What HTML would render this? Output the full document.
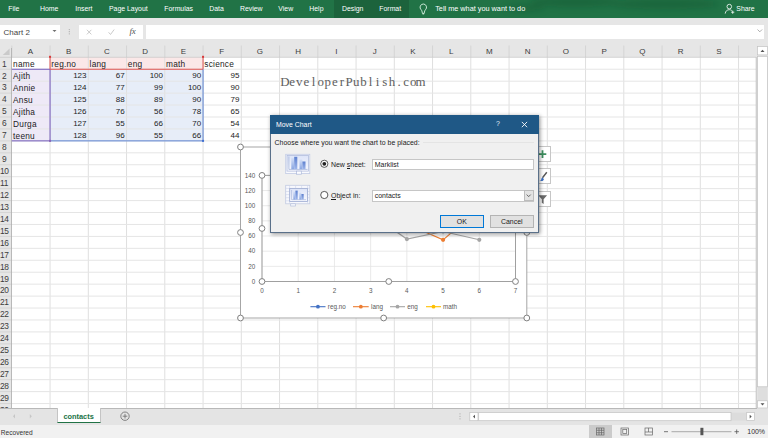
<!DOCTYPE html>
<html><head><meta charset="utf-8"><title>Move Chart</title>
<style>
html,body{margin:0;padding:0;}
body{width:768px;height:438px;overflow:hidden;background:#e6e6e6;font-family:"Liberation Sans",sans-serif;position:relative;}
.abs{position:absolute;}
.t{position:absolute;white-space:nowrap;line-height:1;}
.rib{color:#fff;font-size:6.9px;top:6.3px;}
.cell{font-size:8.3px;color:#1c1c1c;letter-spacing:0.22px;}
.num{font-size:8px;letter-spacing:0;}
.hdr{font-size:8px;color:#3c3c3c;text-align:center;}
.ui{font-size:6.95px;color:#1a1a1a;}
.ax{font-size:6.3px;color:#595959;}
</style></head><body>

<div class="abs" style="left:0;top:0;width:768px;height:17.5px;background:#217346"></div>
<div class="abs" style="left:333.8px;top:0;width:75.6px;height:17.5px;background:#1c633c"></div>
<svg class="abs" style="left:480px;top:0" width="288" height="18" viewBox="480 0 288 18"><defs><filter id="bl" x="-20%" y="-100%" width="140%" height="300%"><feGaussianBlur stdDeviation="3"/></filter></defs><g filter="url(#bl)" fill="#0f4d2b" opacity="0.350"><ellipse cx="575" cy="2" rx="45" ry="5"/><ellipse cx="665" cy="4" rx="55" ry="5"/><ellipse cx="525" cy="8" rx="20" ry="3"/></g></svg>
<div class="t rib" style="left:8.3px">File</div>
<div class="t rib" style="left:40px">Home</div>
<div class="t rib" style="left:75.3px">Insert</div>
<div class="t rib" style="left:109px">Page Layout</div>
<div class="t rib" style="left:164.3px">Formulas</div>
<div class="t rib" style="left:209.3px">Data</div>
<div class="t rib" style="left:240px">Review</div>
<div class="t rib" style="left:278.3px">View</div>
<div class="t rib" style="left:309.3px">Help</div>
<div class="t rib" style="left:342px">Design</div>
<div class="t rib" style="left:379.3px">Format</div>
<div class="t rib" style="left:435.2px;font-size:7.3px;top:5.100px">Tell me what you want to do</div>
<div class="t rib" style="left:736.3px">Share</div>
<svg class="abs" style="left:417px;top:2px" width="13" height="15" viewBox="417 2 13 15"><path d="M423.300 4a3.300 3.300 0 0 0-2.200 5.700c.7.700 1 1.600 1.300 3.700h1.800c.3-2.100.600-3 1.300-3.700A3.300 3.300 0 0 0 423.300 4z" fill="none" stroke="#d8f2e2" stroke-width="0.900"/><path d="M422.500 14h1.600" stroke="#d8f2e2" stroke-width="0.800" fill="none"/></svg>
<svg class="abs" style="left:723px;top:2.400px" width="14" height="14" viewBox="0 0 14 14"><circle cx="6.3" cy="4.6" r="2.3" fill="none" stroke="#fff" stroke-width="0.8"/><path d="M2.2 11.6c.3-2.6 2-3.9 4.1-3.9 1 0 1.800.3 2.500.8" fill="none" stroke="#fff" stroke-width="0.8"/><path d="M9.700 8.600v3.200M8.100 10.200h3.200" stroke="#fff" stroke-width="0.8"/></svg>
<div class="abs" style="left:0;top:24.6px;width:59.8px;height:14px;background:#fff"></div>
<div class="t" style="left:3.6px;top:28.5px;font-size:8px;color:#444">Chart 2</div>
<svg class="abs" style="left:51px;top:28px" width="7" height="6"><path d="M1.500 1.900h4l-2 2.200z" fill="#6e6e6e"/></svg>
<svg class="abs" style="left:67px;top:27px" width="5" height="10"><circle cx="2.300" cy="2.600" r="0.600" fill="#aaa"/><circle cx="2.300" cy="4.700" r="0.600" fill="#aaa"/><circle cx="2.300" cy="6.800" r="0.600" fill="#aaa"/></svg>
<div class="abs" style="left:78.800px;top:24.600px;width:64.400px;height:14px;background:#fff"></div>
<svg class="abs" style="left:78.800px;top:24.600px" width="65" height="14" viewBox="0 0 65 14"><path d="M7.900 4.800l4.500 4.600M12.400 4.800l-4.500 4.600" stroke="#c4c4c4" stroke-width="0.900" fill="none"/><path d="M29.600 7.300l1.900 2.200 3.700-5" stroke="#c4c4c4" stroke-width="0.900" fill="none"/></svg>
<div class="t" style="left:129.500px;top:26.500px;font-size:9px;color:#505050;font-family:'Liberation Serif',serif;font-style:italic;letter-spacing:-0.300px">fx</div>
<div class="abs" style="left:146.400px;top:24.600px;width:617.400px;height:14px;background:#fff"></div>
<svg class="abs" style="left:756px;top:28px" width="8" height="6"><path d="M1.500 1.500l2.300 2.300 2.300-2.300" stroke="#999" stroke-width="0.800" fill="none"/></svg>
<div class="abs" style="left:0;top:45px;width:768px;height:363.5px;background:#e6e6e6"></div>
<div class="abs" style="left:11.8px;top:57.3px;width:744.2px;height:351.2px;background:#fff"></div>
<div class="abs" style="left:11.8px;top:69.24px;width:38.25px;height:71.64px;background:#eee9f7"></div>
<div class="abs" style="left:50.05px;top:57.3px;width:153.0px;height:11.94px;background:#fbe8e8"></div>
<div class="abs" style="left:50.05px;top:69.24px;width:153.0px;height:71.64px;background:#e7edf8"></div>
<svg class="abs" style="left:0;top:0" width="768" height="438" viewBox="0 0 768 438"><g stroke="#e5e5e5" stroke-width="1" fill="none"><path d="M50.05 57.3V408.5" stroke="#dfdfdf"/><path d="M88.30 57.3V408.5" stroke="#dfdfdf"/><path d="M126.55 57.3V408.5" stroke="#dfdfdf"/><path d="M164.80 57.3V408.5" stroke="#dfdfdf"/><path d="M203.05 57.3V408.5" stroke="#dfdfdf"/><path d="M241.30 57.3V408.5" stroke="#dfdfdf"/><path d="M279.55 57.3V408.5" stroke="#dfdfdf"/><path d="M317.80 57.3V408.5" stroke="#dfdfdf"/><path d="M356.05 57.3V408.5" stroke="#dfdfdf"/><path d="M394.30 57.3V408.5" stroke="#dfdfdf"/><path d="M432.55 57.3V408.5" stroke="#dfdfdf"/><path d="M470.80 57.3V408.5" stroke="#dfdfdf"/><path d="M509.05 57.3V408.5" stroke="#dfdfdf"/><path d="M547.30 57.3V408.5" stroke="#dfdfdf"/><path d="M585.55 57.3V408.5" stroke="#dfdfdf"/><path d="M623.80 57.3V408.5" stroke="#dfdfdf"/><path d="M662.05 57.3V408.5" stroke="#dfdfdf"/><path d="M700.30 57.3V408.5" stroke="#dfdfdf"/><path d="M738.55 57.3V408.5" stroke="#dfdfdf"/><path d="M11.8 69.24H756.0"/><path d="M11.8 81.18H756.0"/><path d="M11.8 93.12H756.0"/><path d="M11.8 105.06H756.0"/><path d="M11.8 117.00H756.0"/><path d="M11.8 128.94H756.0"/><path d="M11.8 140.88H756.0"/><path d="M11.8 152.82H756.0"/><path d="M11.8 164.76H756.0"/><path d="M11.8 176.70H756.0"/><path d="M11.8 188.64H756.0"/><path d="M11.8 200.58H756.0"/><path d="M11.8 212.52H756.0"/><path d="M11.8 224.46H756.0"/><path d="M11.8 236.40H756.0"/><path d="M11.8 248.34H756.0"/><path d="M11.8 260.28H756.0"/><path d="M11.8 272.22H756.0"/><path d="M11.8 284.16H756.0"/><path d="M11.8 296.10H756.0"/><path d="M11.8 308.04H756.0"/><path d="M11.8 319.98H756.0"/><path d="M11.8 331.92H756.0"/><path d="M11.8 343.86H756.0"/><path d="M11.8 355.80H756.0"/><path d="M11.8 367.74H756.0"/><path d="M11.8 379.68H756.0"/><path d="M11.8 391.62H756.0"/><path d="M11.8 403.56H756.0"/></g><g stroke="#cfcfcf" stroke-width="0.8" fill="none"><path d="M11.80 45.500V57.3"/><path d="M50.05 45.500V57.3"/><path d="M88.30 45.500V57.3"/><path d="M126.55 45.500V57.3"/><path d="M164.80 45.500V57.3"/><path d="M203.05 45.500V57.3"/><path d="M241.30 45.500V57.3"/><path d="M279.55 45.500V57.3"/><path d="M317.80 45.500V57.3"/><path d="M356.05 45.500V57.3"/><path d="M394.30 45.500V57.3"/><path d="M432.55 45.500V57.3"/><path d="M470.80 45.500V57.3"/><path d="M509.05 45.500V57.3"/><path d="M547.30 45.500V57.3"/><path d="M585.55 45.500V57.3"/><path d="M623.80 45.500V57.3"/><path d="M662.05 45.500V57.3"/><path d="M700.30 45.500V57.3"/><path d="M738.55 45.500V57.3"/><path d="M0 69.24H11.8"/><path d="M0 81.18H11.8"/><path d="M0 93.12H11.8"/><path d="M0 105.06H11.8"/><path d="M0 117.00H11.8"/><path d="M0 128.94H11.8"/><path d="M0 140.88H11.8"/><path d="M0 152.82H11.8"/><path d="M0 164.76H11.8"/><path d="M0 176.70H11.8"/><path d="M0 188.64H11.8"/><path d="M0 200.58H11.8"/><path d="M0 212.52H11.8"/><path d="M0 224.46H11.8"/><path d="M0 236.40H11.8"/><path d="M0 248.34H11.8"/><path d="M0 260.28H11.8"/><path d="M0 272.22H11.8"/><path d="M0 284.16H11.8"/><path d="M0 296.10H11.8"/><path d="M0 308.04H11.8"/><path d="M0 319.98H11.8"/><path d="M0 331.92H11.8"/><path d="M0 343.86H11.8"/><path d="M0 355.80H11.8"/><path d="M0 367.74H11.8"/><path d="M0 379.68H11.8"/><path d="M0 391.62H11.8"/><path d="M0 403.56H11.8"/></g><path d="M0 57.3H756.0" stroke="#c9c9c9" stroke-width="0.8"/><path d="M11.5 48V408.5" stroke="#adadad" stroke-width="0.8"/><path d="M9.600 48.400V55H2.800z" fill="#cacaca"/><path d="M11.8 69.24H50.05V140.88H11.8" stroke="#7158ba" stroke-width="1" fill="none"/><path d="M50.05 56.3V69.24H203.05V56.3" stroke="#e0504d" stroke-width="1" fill="none"/><path d="M50.05 140.88H203.05V69.24" stroke="#5a82d2" stroke-width="1" fill="none"/><rect x="49.05" y="139.88" width="2" height="2" fill="#8a63b8"/><rect x="202.05" y="139.88" width="2" height="2" fill="#3f6fd0"/><rect x="49.05" y="55.8" width="2" height="2" fill="#d8393a"/><rect x="202.05" y="55.8" width="2" height="2" fill="#d8393a"/></svg>
<div class="t hdr" style="left:11.30px;top:48.100px;width:38.25px">A</div>
<div class="t hdr" style="left:49.55px;top:48.100px;width:38.25px">B</div>
<div class="t hdr" style="left:87.80px;top:48.100px;width:38.25px">C</div>
<div class="t hdr" style="left:126.05px;top:48.100px;width:38.25px">D</div>
<div class="t hdr" style="left:164.30px;top:48.100px;width:38.25px">E</div>
<div class="t hdr" style="left:202.55px;top:48.100px;width:38.25px">F</div>
<div class="t hdr" style="left:240.80px;top:48.100px;width:38.25px">G</div>
<div class="t hdr" style="left:279.05px;top:48.100px;width:38.25px">H</div>
<div class="t hdr" style="left:317.30px;top:48.100px;width:38.25px">I</div>
<div class="t hdr" style="left:355.55px;top:48.100px;width:38.25px">J</div>
<div class="t hdr" style="left:393.80px;top:48.100px;width:38.25px">K</div>
<div class="t hdr" style="left:432.05px;top:48.100px;width:38.25px">L</div>
<div class="t hdr" style="left:470.30px;top:48.100px;width:38.25px">M</div>
<div class="t hdr" style="left:508.55px;top:48.100px;width:38.25px">N</div>
<div class="t hdr" style="left:546.80px;top:48.100px;width:38.25px">O</div>
<div class="t hdr" style="left:585.05px;top:48.100px;width:38.25px">P</div>
<div class="t hdr" style="left:623.30px;top:48.100px;width:38.25px">Q</div>
<div class="t hdr" style="left:661.55px;top:48.100px;width:38.25px">R</div>
<div class="t hdr" style="left:699.80px;top:48.100px;width:38.25px">S</div>
<div class="t hdr" style="left:0;top:59.60px;width:8.200000000000001px;font-size:8.400px;letter-spacing:-0.350px">1</div>
<div class="t hdr" style="left:0;top:71.54px;width:8.200000000000001px;font-size:8.400px;letter-spacing:-0.350px">2</div>
<div class="t hdr" style="left:0;top:83.48px;width:8.200000000000001px;font-size:8.400px;letter-spacing:-0.350px">3</div>
<div class="t hdr" style="left:0;top:95.42px;width:8.200000000000001px;font-size:8.400px;letter-spacing:-0.350px">4</div>
<div class="t hdr" style="left:0;top:107.36px;width:8.200000000000001px;font-size:8.400px;letter-spacing:-0.350px">5</div>
<div class="t hdr" style="left:0;top:119.30px;width:8.200000000000001px;font-size:8.400px;letter-spacing:-0.350px">6</div>
<div class="t hdr" style="left:0;top:131.24px;width:8.200000000000001px;font-size:8.400px;letter-spacing:-0.350px">7</div>
<div class="t hdr" style="left:0;top:143.18px;width:8.200000000000001px;font-size:8.400px;letter-spacing:-0.350px">8</div>
<div class="t hdr" style="left:0;top:155.12px;width:8.200000000000001px;font-size:8.400px;letter-spacing:-0.350px">9</div>
<div class="t hdr" style="left:0;top:167.06px;width:8.200000000000001px;font-size:8.400px;letter-spacing:-0.350px">10</div>
<div class="t hdr" style="left:0;top:179.00px;width:8.200000000000001px;font-size:8.400px;letter-spacing:-0.350px">11</div>
<div class="t hdr" style="left:0;top:190.94px;width:8.200000000000001px;font-size:8.400px;letter-spacing:-0.350px">12</div>
<div class="t hdr" style="left:0;top:202.88px;width:8.200000000000001px;font-size:8.400px;letter-spacing:-0.350px">13</div>
<div class="t hdr" style="left:0;top:214.82px;width:8.200000000000001px;font-size:8.400px;letter-spacing:-0.350px">14</div>
<div class="t hdr" style="left:0;top:226.76px;width:8.200000000000001px;font-size:8.400px;letter-spacing:-0.350px">15</div>
<div class="t hdr" style="left:0;top:238.70px;width:8.200000000000001px;font-size:8.400px;letter-spacing:-0.350px">16</div>
<div class="t hdr" style="left:0;top:250.64px;width:8.200000000000001px;font-size:8.400px;letter-spacing:-0.350px">17</div>
<div class="t hdr" style="left:0;top:262.58px;width:8.200000000000001px;font-size:8.400px;letter-spacing:-0.350px">18</div>
<div class="t hdr" style="left:0;top:274.52px;width:8.200000000000001px;font-size:8.400px;letter-spacing:-0.350px">19</div>
<div class="t hdr" style="left:0;top:286.46px;width:8.200000000000001px;font-size:8.400px;letter-spacing:-0.350px">20</div>
<div class="t hdr" style="left:0;top:298.40px;width:8.200000000000001px;font-size:8.400px;letter-spacing:-0.350px">21</div>
<div class="t hdr" style="left:0;top:310.34px;width:8.200000000000001px;font-size:8.400px;letter-spacing:-0.350px">22</div>
<div class="t hdr" style="left:0;top:322.28px;width:8.200000000000001px;font-size:8.400px;letter-spacing:-0.350px">23</div>
<div class="t hdr" style="left:0;top:334.22px;width:8.200000000000001px;font-size:8.400px;letter-spacing:-0.350px">24</div>
<div class="t hdr" style="left:0;top:346.16px;width:8.200000000000001px;font-size:8.400px;letter-spacing:-0.350px">25</div>
<div class="t hdr" style="left:0;top:358.10px;width:8.200000000000001px;font-size:8.400px;letter-spacing:-0.350px">26</div>
<div class="t hdr" style="left:0;top:370.04px;width:8.200000000000001px;font-size:8.400px;letter-spacing:-0.350px">27</div>
<div class="t hdr" style="left:0;top:381.98px;width:8.200000000000001px;font-size:8.400px;letter-spacing:-0.350px">28</div>
<div class="t hdr" style="left:0;top:393.92px;width:8.200000000000001px;font-size:8.400px;letter-spacing:-0.350px">29</div>
<div class="t hdr" style="left:0;top:405.86px;width:8.200000000000001px;font-size:8.400px;letter-spacing:-0.350px">30</div>
<div class="t cell" style="left:13.10px;top:59.90px">name</div>
<div class="t cell" style="left:51.35px;top:59.90px">reg.no</div>
<div class="t cell" style="left:89.60px;top:59.90px">lang</div>
<div class="t cell" style="left:127.85px;top:59.90px">eng</div>
<div class="t cell" style="left:166.10px;top:59.90px">math</div>
<div class="t cell" style="left:204.35px;top:59.90px">science</div>
<div class="t cell" style="left:13.10px;top:71.84px">Ajith</div>
<div class="t cell num" style="left:50.05px;width:36.45px;text-align:right;top:72.04px">123</div>
<div class="t cell num" style="left:88.30px;width:36.45px;text-align:right;top:72.04px">67</div>
<div class="t cell num" style="left:126.55px;width:36.45px;text-align:right;top:72.04px">100</div>
<div class="t cell num" style="left:164.80px;width:36.45px;text-align:right;top:72.04px">90</div>
<div class="t cell num" style="left:203.05px;width:36.45px;text-align:right;top:72.04px">95</div>
<div class="t cell" style="left:13.10px;top:83.78px">Annie</div>
<div class="t cell num" style="left:50.05px;width:36.45px;text-align:right;top:83.98px">124</div>
<div class="t cell num" style="left:88.30px;width:36.45px;text-align:right;top:83.98px">77</div>
<div class="t cell num" style="left:126.55px;width:36.45px;text-align:right;top:83.98px">99</div>
<div class="t cell num" style="left:164.80px;width:36.45px;text-align:right;top:83.98px">100</div>
<div class="t cell num" style="left:203.05px;width:36.45px;text-align:right;top:83.98px">90</div>
<div class="t cell" style="left:13.10px;top:95.72px">Ansu</div>
<div class="t cell num" style="left:50.05px;width:36.45px;text-align:right;top:95.92px">125</div>
<div class="t cell num" style="left:88.30px;width:36.45px;text-align:right;top:95.92px">88</div>
<div class="t cell num" style="left:126.55px;width:36.45px;text-align:right;top:95.92px">89</div>
<div class="t cell num" style="left:164.80px;width:36.45px;text-align:right;top:95.92px">90</div>
<div class="t cell num" style="left:203.05px;width:36.45px;text-align:right;top:95.92px">79</div>
<div class="t cell" style="left:13.10px;top:107.66px">Ajitha</div>
<div class="t cell num" style="left:50.05px;width:36.45px;text-align:right;top:107.86px">126</div>
<div class="t cell num" style="left:88.30px;width:36.45px;text-align:right;top:107.86px">76</div>
<div class="t cell num" style="left:126.55px;width:36.45px;text-align:right;top:107.86px">56</div>
<div class="t cell num" style="left:164.80px;width:36.45px;text-align:right;top:107.86px">78</div>
<div class="t cell num" style="left:203.05px;width:36.45px;text-align:right;top:107.86px">65</div>
<div class="t cell" style="left:13.10px;top:119.60px">Durga</div>
<div class="t cell num" style="left:50.05px;width:36.45px;text-align:right;top:119.80px">127</div>
<div class="t cell num" style="left:88.30px;width:36.45px;text-align:right;top:119.80px">55</div>
<div class="t cell num" style="left:126.55px;width:36.45px;text-align:right;top:119.80px">66</div>
<div class="t cell num" style="left:164.80px;width:36.45px;text-align:right;top:119.80px">70</div>
<div class="t cell num" style="left:203.05px;width:36.45px;text-align:right;top:119.80px">54</div>
<div class="t cell" style="left:13.10px;top:131.54px">teenu</div>
<div class="t cell num" style="left:50.05px;width:36.45px;text-align:right;top:131.74px">128</div>
<div class="t cell num" style="left:88.30px;width:36.45px;text-align:right;top:131.74px">96</div>
<div class="t cell num" style="left:126.55px;width:36.45px;text-align:right;top:131.74px">55</div>
<div class="t cell num" style="left:164.80px;width:36.45px;text-align:right;top:131.74px">66</div>
<div class="t cell num" style="left:203.05px;width:36.45px;text-align:right;top:131.74px">44</div>
<svg class="abs" style="left:0;top:70px" width="768" height="30" viewBox="0 70 768 30"><text x="284.97 292.10 299.23 306.36 313.49 320.62 327.75 334.88 342.01 349.14 356.27 363.40 370.53 377.66 384.79 391.92 399.05 406.18 413.31 420.44" y="86.300" text-anchor="middle" font-family="Liberation Serif, serif" font-size="12.900" fill="#606060">DeveloperPublish.com</text></svg>
<svg class="abs" style="left:0;top:0" width="768" height="438" viewBox="0 0 768 438"><rect x="240.5" y="147" width="286.29999999999995" height="171" fill="#fff" stroke="#a6a6a6" stroke-width="1"/><g stroke="#e3e3e3" stroke-width="0.8"><path d="M262 281.50H515.5"/><path d="M262 266.34H515.5"/><path d="M262 251.19H515.5"/><path d="M262 236.03H515.5"/><path d="M262 220.87H515.5"/><path d="M262 205.71H515.5"/><path d="M262 190.56H515.5"/><path d="M262 175.40H515.5"/><path d="M262.00 175.4V281.5"/><path d="M298.21 175.4V281.5"/><path d="M334.43 175.4V281.5"/><path d="M370.64 175.4V281.5"/><path d="M406.86 175.4V281.5"/><path d="M443.07 175.4V281.5"/><path d="M479.29 175.4V281.5"/><path d="M515.50 175.4V281.5"/></g><rect x="262" y="175.4" width="253.5" height="106.1" fill="none" stroke="#a0a0a0" stroke-width="1"/><polyline points="298.21,230.72 334.43,223.15 370.64,214.81 406.86,223.90 443.07,239.82 479.29,208.75" fill="none" stroke="#ed7d31" stroke-width="1.100"/><circle cx="298.21" cy="230.72" r="2.100" fill="#ed7d31"/><circle cx="334.43" cy="223.15" r="2.100" fill="#ed7d31"/><circle cx="370.64" cy="214.81" r="2.100" fill="#ed7d31"/><circle cx="406.86" cy="223.90" r="2.100" fill="#ed7d31"/><circle cx="443.07" cy="239.82" r="2.100" fill="#ed7d31"/><circle cx="479.29" cy="208.75" r="2.100" fill="#ed7d31"/><polyline points="298.21,205.71 334.43,206.47 370.64,214.05 406.86,239.06 443.07,231.48 479.29,239.82" fill="none" stroke="#a5a5a5" stroke-width="1.100"/><circle cx="298.21" cy="205.71" r="2.100" fill="#a5a5a5"/><circle cx="334.43" cy="206.47" r="2.100" fill="#a5a5a5"/><circle cx="370.64" cy="214.05" r="2.100" fill="#a5a5a5"/><circle cx="406.86" cy="239.06" r="2.100" fill="#a5a5a5"/><circle cx="443.07" cy="231.48" r="2.100" fill="#a5a5a5"/><circle cx="479.29" cy="239.82" r="2.100" fill="#a5a5a5"/><path d="M310.4 306.700H325.5" stroke="#4472c4" stroke-width="1.100"/><circle cx="317.95" cy="306.700" r="1.900" fill="#4472c4"/><text x="327.8" y="308.800" font-size="6.300" fill="#595959" font-family="Liberation Sans, sans-serif">reg.no</text><path d="M353 306.700H368.7" stroke="#ed7d31" stroke-width="1.100"/><circle cx="360.85" cy="306.700" r="1.900" fill="#ed7d31"/><text x="371" y="308.800" font-size="6.300" fill="#595959" font-family="Liberation Sans, sans-serif">lang</text><path d="M390 306.700H405" stroke="#a5a5a5" stroke-width="1.100"/><circle cx="397.5" cy="306.700" r="1.900" fill="#a5a5a5"/><text x="407.3" y="308.800" font-size="6.300" fill="#595959" font-family="Liberation Sans, sans-serif">eng</text><path d="M426 306.700H441" stroke="#ffc000" stroke-width="1.100"/><circle cx="433.5" cy="306.700" r="1.900" fill="#ffc000"/><text x="443" y="308.800" font-size="6.300" fill="#595959" font-family="Liberation Sans, sans-serif">math</text><text x="255.200" y="283.70" text-anchor="end" font-size="6.300" fill="#595959" font-family="Liberation Sans, sans-serif">0</text><text x="262.00" y="293" text-anchor="middle" font-size="6.300" fill="#595959" font-family="Liberation Sans, sans-serif">0</text><text x="255.200" y="268.54" text-anchor="end" font-size="6.300" fill="#595959" font-family="Liberation Sans, sans-serif">20</text><text x="298.21" y="293" text-anchor="middle" font-size="6.300" fill="#595959" font-family="Liberation Sans, sans-serif">1</text><text x="255.200" y="253.39" text-anchor="end" font-size="6.300" fill="#595959" font-family="Liberation Sans, sans-serif">40</text><text x="334.43" y="293" text-anchor="middle" font-size="6.300" fill="#595959" font-family="Liberation Sans, sans-serif">2</text><text x="255.200" y="238.23" text-anchor="end" font-size="6.300" fill="#595959" font-family="Liberation Sans, sans-serif">60</text><text x="370.64" y="293" text-anchor="middle" font-size="6.300" fill="#595959" font-family="Liberation Sans, sans-serif">3</text><text x="255.200" y="223.07" text-anchor="end" font-size="6.300" fill="#595959" font-family="Liberation Sans, sans-serif">80</text><text x="406.86" y="293" text-anchor="middle" font-size="6.300" fill="#595959" font-family="Liberation Sans, sans-serif">4</text><text x="255.200" y="207.91" text-anchor="end" font-size="6.300" fill="#595959" font-family="Liberation Sans, sans-serif">100</text><text x="443.07" y="293" text-anchor="middle" font-size="6.300" fill="#595959" font-family="Liberation Sans, sans-serif">5</text><text x="255.200" y="192.76" text-anchor="end" font-size="6.300" fill="#595959" font-family="Liberation Sans, sans-serif">120</text><text x="479.29" y="293" text-anchor="middle" font-size="6.300" fill="#595959" font-family="Liberation Sans, sans-serif">6</text><text x="255.200" y="177.60" text-anchor="end" font-size="6.300" fill="#595959" font-family="Liberation Sans, sans-serif">140</text><text x="515.50" y="293" text-anchor="middle" font-size="6.300" fill="#595959" font-family="Liberation Sans, sans-serif">7</text><circle cx="240.50" cy="147.00" r="2.900" fill="#fff" stroke="#808080" stroke-width="1"/><circle cx="383.65" cy="147.00" r="2.900" fill="#fff" stroke="#808080" stroke-width="1"/><circle cx="526.80" cy="147.00" r="2.900" fill="#fff" stroke="#808080" stroke-width="1"/><circle cx="240.50" cy="232.50" r="2.900" fill="#fff" stroke="#808080" stroke-width="1"/><circle cx="526.80" cy="232.50" r="2.900" fill="#fff" stroke="#808080" stroke-width="1"/><circle cx="240.50" cy="318.00" r="2.900" fill="#fff" stroke="#808080" stroke-width="1"/><circle cx="383.65" cy="318.00" r="2.900" fill="#fff" stroke="#808080" stroke-width="1"/><circle cx="526.80" cy="318.00" r="2.900" fill="#fff" stroke="#808080" stroke-width="1"/><circle cx="262.00" cy="175.40" r="2.900" fill="#fff" stroke="#808080" stroke-width="1"/><circle cx="388.75" cy="175.40" r="2.900" fill="#fff" stroke="#808080" stroke-width="1"/><circle cx="515.50" cy="175.40" r="2.900" fill="#fff" stroke="#808080" stroke-width="1"/><circle cx="262.00" cy="228.45" r="2.900" fill="#fff" stroke="#808080" stroke-width="1"/><circle cx="515.50" cy="228.45" r="2.900" fill="#fff" stroke="#808080" stroke-width="1"/><circle cx="262.00" cy="281.50" r="2.900" fill="#fff" stroke="#808080" stroke-width="1"/><circle cx="388.75" cy="281.50" r="2.900" fill="#fff" stroke="#808080" stroke-width="1"/><circle cx="515.50" cy="281.50" r="2.900" fill="#fff" stroke="#808080" stroke-width="1"/></svg>
<div class="abs" style="left:534.500px;top:146.1px;width:16.200px;height:16px;background:#fff;border:0.800px solid #c6c6c6;box-sizing:border-box"></div>
<div class="abs" style="left:534.500px;top:168.4px;width:16.200px;height:16px;background:#fff;border:0.800px solid #c6c6c6;box-sizing:border-box"></div>
<div class="abs" style="left:534.500px;top:191.1px;width:16.200px;height:16px;background:#fff;border:0.800px solid #c6c6c6;box-sizing:border-box"></div>
<svg class="abs" style="left:534px;top:146px" width="18" height="62" viewBox="534 146 18 62">
<path d="M542.500 150.300v7.600M538.700 154.100h7.600" stroke="#3d8e5e" stroke-width="1.800" fill="none"/>
<path d="M546.800 172.300l-4.300 5.400" stroke="#555" stroke-width="1.400" fill="none"/><path d="M542.600 177.400c-1 .2-1.500 1.300-1.500 2.800-.5.300-1.200.300-1.800 0 1.300 1.300 4 1.300 4.600-1z" fill="#3a6fc4"/>
<path d="M538.300 195.200h8.800l-3.500 4.100v4.600l-1.800-1.100v-3.500z" fill="#6a6a6a"/>
</svg>
<div class="abs" style="left:270.4px;top:115.3px;width:268.5px;height:117.89999999999999px;background:#f0f0f0;box-shadow:1px 1px 4px rgba(0,0,0,0.45);border:0.800px solid #5a7089;box-sizing:border-box"></div>
<div class="abs" style="left:270.4px;top:115.3px;width:268.5px;height:18.500000000000014px;background:#1f5886"></div>
<div class="t" style="left:276px;top:122.100px;font-size:6.900px;color:#fff">Move Chart</div>
<div class="t" style="left:496px;top:120.200px;font-size:7px;color:#e6eef7">?</div>
<svg class="abs" style="left:520px;top:120px" width="10" height="10"><path d="M1.800 1.900l5.300 5.300M7.100 1.900l-5.300 5.300" stroke="#fff" stroke-width="0.900"/></svg>
<div class="t ui" style="left:274.600px;top:139.800px">Choose where you want the chart to be placed:</div>
<div class="abs" style="left:423px;top:142.200px;width:111px;height:0.900px;background:#e4e4e4"></div>
<svg class="abs" style="left:318px;top:157px" width="14" height="46" viewBox="318 157 14 46"><circle cx="324.300" cy="163.800" r="3.600" fill="#fff" stroke="#333" stroke-width="0.800"/><circle cx="324.300" cy="163.800" r="1.900" fill="#222"/><circle cx="324.300" cy="195" r="3.600" fill="#fff" stroke="#333" stroke-width="0.800"/></svg>
<div class="t ui" style="left:331px;top:161.500px">New sheet:</div>
<div class="abs" style="left:346.800px;top:168px;width:3.500px;height:0.600px;background:#1a1a1a"></div>
<div class="t ui" style="left:331px;top:192.600px">Object in:</div>
<div class="abs" style="left:331.200px;top:199.100px;width:5px;height:0.600px;background:#1a1a1a"></div>
<div class="abs" style="left:372px;top:158.700px;width:162.400px;height:11.200px;background:#fff;border:0.800px solid #c6c6c6;box-sizing:border-box"></div>
<div class="t ui" style="left:374.800px;top:161.800px">Marklist</div>
<div class="abs" style="left:372px;top:189.500px;width:162.400px;height:12.200px;background:#fff;border:0.800px solid #c6c6c6;box-sizing:border-box"></div>
<div class="abs" style="left:523.800px;top:190.300px;width:9.800px;height:10.600px;background:#e3e3e3;border:0.800px solid #bcbcbc;box-sizing:border-box"></div>
<svg class="abs" style="left:524px;top:191px" width="10" height="10"><path d="M2.700 3.600l2 2 2-2" stroke="#444" stroke-width="0.800" fill="none"/></svg>
<div class="t ui" style="left:374.800px;top:193px">contacts</div>
<div class="abs" style="left:439.600px;top:215.400px;width:44.400px;height:12.300px;background:#e1e1e1;border:1.200px solid #0078d7;box-sizing:border-box"></div>
<div class="t ui" style="left:439.600px;top:219.100px;width:44.400px;text-align:center">OK</div>
<div class="abs" style="left:489.800px;top:215.400px;width:44px;height:12.300px;background:#e1e1e1;border:0.800px solid #b4b4b4;box-sizing:border-box"></div>
<div class="t ui" style="left:489.800px;top:219.100px;width:44px;text-align:center">Cancel</div>
<svg class="abs" style="left:284px;top:152px" width="28" height="56" viewBox="284 152 28 56">
<defs>
<linearGradient id="gf" x1="0" y1="0" x2="0" y2="1"><stop offset="0" stop-color="#dde4f8"/><stop offset="1" stop-color="#f8f9fe"/></linearGradient>
<linearGradient id="gb1" x1="0" y1="0" x2="0" y2="1"><stop offset="0" stop-color="#d6e1f8"/><stop offset="1" stop-color="#8aa6e2"/></linearGradient>
<linearGradient id="gb2" x1="0" y1="0" x2="0" y2="1"><stop offset="0" stop-color="#5d80cf"/><stop offset="1" stop-color="#9fb6ea"/></linearGradient>
</defs>
<rect x="285.700" y="154.300" width="24.100" height="19.300" fill="#f9fafe" stroke="#c2cbe4" stroke-width="0.800"/>
<rect x="287" y="155.500" width="21.500" height="15.600" fill="url(#gf)" stroke="#aab7d9" stroke-width="0.700"/>
<path d="M288.900 156.500V169.400H307.600" stroke="#90a2cf" stroke-width="0.600" fill="none"/>
<rect x="291.300" y="157.600" width="2.900" height="11.600" fill="url(#gb1)"/><rect x="294.200" y="156.800" width="3.100" height="12.400" fill="url(#gb2)"/>
<rect x="299.500" y="159.400" width="2.900" height="9.800" fill="url(#gb1)"/><rect x="302.400" y="161.500" width="3.100" height="7.700" fill="url(#gb2)"/>
<rect x="296.600" y="171.100" width="4.700" height="3.100" fill="#fdfdff" stroke="#aab7d9" stroke-width="0.700"/>
<rect x="285.700" y="185.300" width="24.100" height="18.500" fill="#f7f8fd" stroke="#c3cbe2" stroke-width="0.800"/>
<path d="M285.700 188.400h24.100M285.700 191.500h24.100M285.700 194.600h24.100M285.700 197.700h24.100M285.700 200.800h24.100M289.600 185.300v18.500M307.600 185.300v18.500M295.600 185.300v3M301.600 185.300v3" stroke="#cdd4e8" stroke-width="0.600" fill="none"/>
<rect x="289.700" y="188.500" width="17.800" height="13" fill="url(#gf)" stroke="#9eacd2" stroke-width="0.800"/>
<path d="M291.600 190V199.700H306" stroke="#90a2cf" stroke-width="0.500" fill="none"/>
<rect x="293.300" y="191.400" width="2.100" height="8.200" fill="url(#gb1)"/><rect x="295.400" y="190.600" width="2.300" height="9" fill="url(#gb2)"/>
<rect x="299.300" y="192.600" width="2.100" height="7" fill="url(#gb1)"/><rect x="301.400" y="194" width="2.300" height="5.600" fill="url(#gb2)"/>
<rect x="290.700" y="203.800" width="4.900" height="2.200" fill="#fbfcff" stroke="#b2bddb" stroke-width="0.700"/>
</svg>
<div class="abs" style="left:0;top:408.5px;width:768px;height:16.5px;background:#e4e4e4"></div>
<div class="abs" style="left:0;top:408.1px;width:757px;height:0.900px;background:#b8b8b8"></div>
<div class="abs" style="left:56.600px;top:408.200px;width:44px;height:14.800px;background:#fff;border-bottom:1.400px solid #217346;border-left:0.700px solid #c4c4c4;border-right:0.700px solid #c4c4c4;box-sizing:border-box"></div>
<div class="t" style="left:56.600px;top:412.600px;width:44px;text-align:center;font-size:7.400px;font-weight:bold;color:#217346">contacts</div>
<svg class="abs" style="left:0;top:409px" width="140" height="15" viewBox="0 409 140 15"><path d="M15 414l-2 2.300 2 2.300z" fill="#c6c6c6"/><path d="M29.800 414l2 2.300-2 2.300z" fill="#c6c6c6"/><circle cx="125" cy="416.200" r="4.200" fill="none" stroke="#6a6a6a" stroke-width="0.800"/><path d="M122.700 416.200h4.600M125 413.900v4.600" stroke="#6a6a6a" stroke-width="0.800"/></svg>
<svg class="abs" style="left:455px;top:410px" width="305" height="13" viewBox="455 410 305 13">
<circle cx="460" cy="413.800" r="0.600" fill="#aaa"/><circle cx="460" cy="416.300" r="0.600" fill="#aaa"/><circle cx="460" cy="418.800" r="0.600" fill="#aaa"/>
<rect x="469.800" y="412.500" width="8.200" height="8.200" fill="#fff" stroke="#c2c2c2" stroke-width="0.700"/><path d="M475 414.800l-2 1.800 2 1.800z" fill="#555"/>
<rect x="478" y="412.600" width="268.500" height="8" fill="#dcdcdc"/><rect x="478.700" y="412.500" width="252.300" height="8.200" fill="#fff" stroke="#c2c2c2" stroke-width="0.700"/>
<rect x="746.700" y="412.600" width="7.800" height="8" fill="#fff" stroke="#c2c2c2" stroke-width="0.700"/><path d="M749.700 414.800l2 1.800-2 1.800z" fill="#555"/>
</svg>
<div class="abs" style="left:756.500px;top:45px;width:11.500px;height:363.5px;background:#e6e6e6"></div>
<svg class="abs" style="left:755px;top:45px" width="13" height="365" viewBox="755 45 13 365">
<path d="M756.200 57V408.500" stroke="#bdbdbd" stroke-width="0.800"/>
<rect x="757.600" y="46.600" width="9.800" height="8.300" fill="#fff" stroke="#c2c2c2" stroke-width="0.700"/><path d="M760.500 52l2-2.200 2 2.200z" fill="#555"/>
<rect x="757.600" y="55" width="9.800" height="346" fill="#dedede"/><rect x="757.600" y="56.300" width="9.800" height="330.500" fill="#fff" stroke="#c2c2c2" stroke-width="0.700"/>
<rect x="757.600" y="400.800" width="9.800" height="7.200" fill="#fff" stroke="#c2c2c2" stroke-width="0.700"/><path d="M760.500 403.300l2 2.200 2-2.200z" fill="#555"/>
</svg>
<div class="abs" style="left:0;top:425.100px;width:768px;height:12.900px;background:#f1f1f1"></div>
<div class="t ui" style="left:0.800px;top:429.900px;color:#333;font-size:6.600px">Recovered</div>
<div class="abs" style="left:589px;top:425.100px;width:22.800px;height:12.900px;background:#cbcbcb"></div>
<svg class="abs" style="left:585px;top:425px" width="183" height="13" viewBox="585 425 183 13">
<g stroke="#666" stroke-width="0.700" fill="none">
<rect x="596.500" y="428" width="7.500" height="7"/><path d="M599 428v7M601.500 428v7M596.500 430.300h7.500M596.500 432.700h7.500"/>
<rect x="621" y="428" width="7.500" height="7"/><rect x="622.800" y="429.500" width="3.900" height="4"/>
<rect x="645" y="428" width="7.500" height="7"/><path d="M645 432h3.500v-4M648.500 432h4"/>
</g>
<path d="M664 431.700h4" stroke="#555" stroke-width="0.800"/>
<path d="M671.500 431.700h60" stroke="#8a8a8a" stroke-width="0.700"/>
<rect x="700.400" y="427.800" width="3" height="7.400" fill="#555"/>
<path d="M734.500 431.700h4.400M736.700 429.500v4.400" stroke="#555" stroke-width="0.800"/>
</svg>
<div class="t ui" style="left:747.300px;top:428.700px;color:#333">100%</div>
</body></html>
